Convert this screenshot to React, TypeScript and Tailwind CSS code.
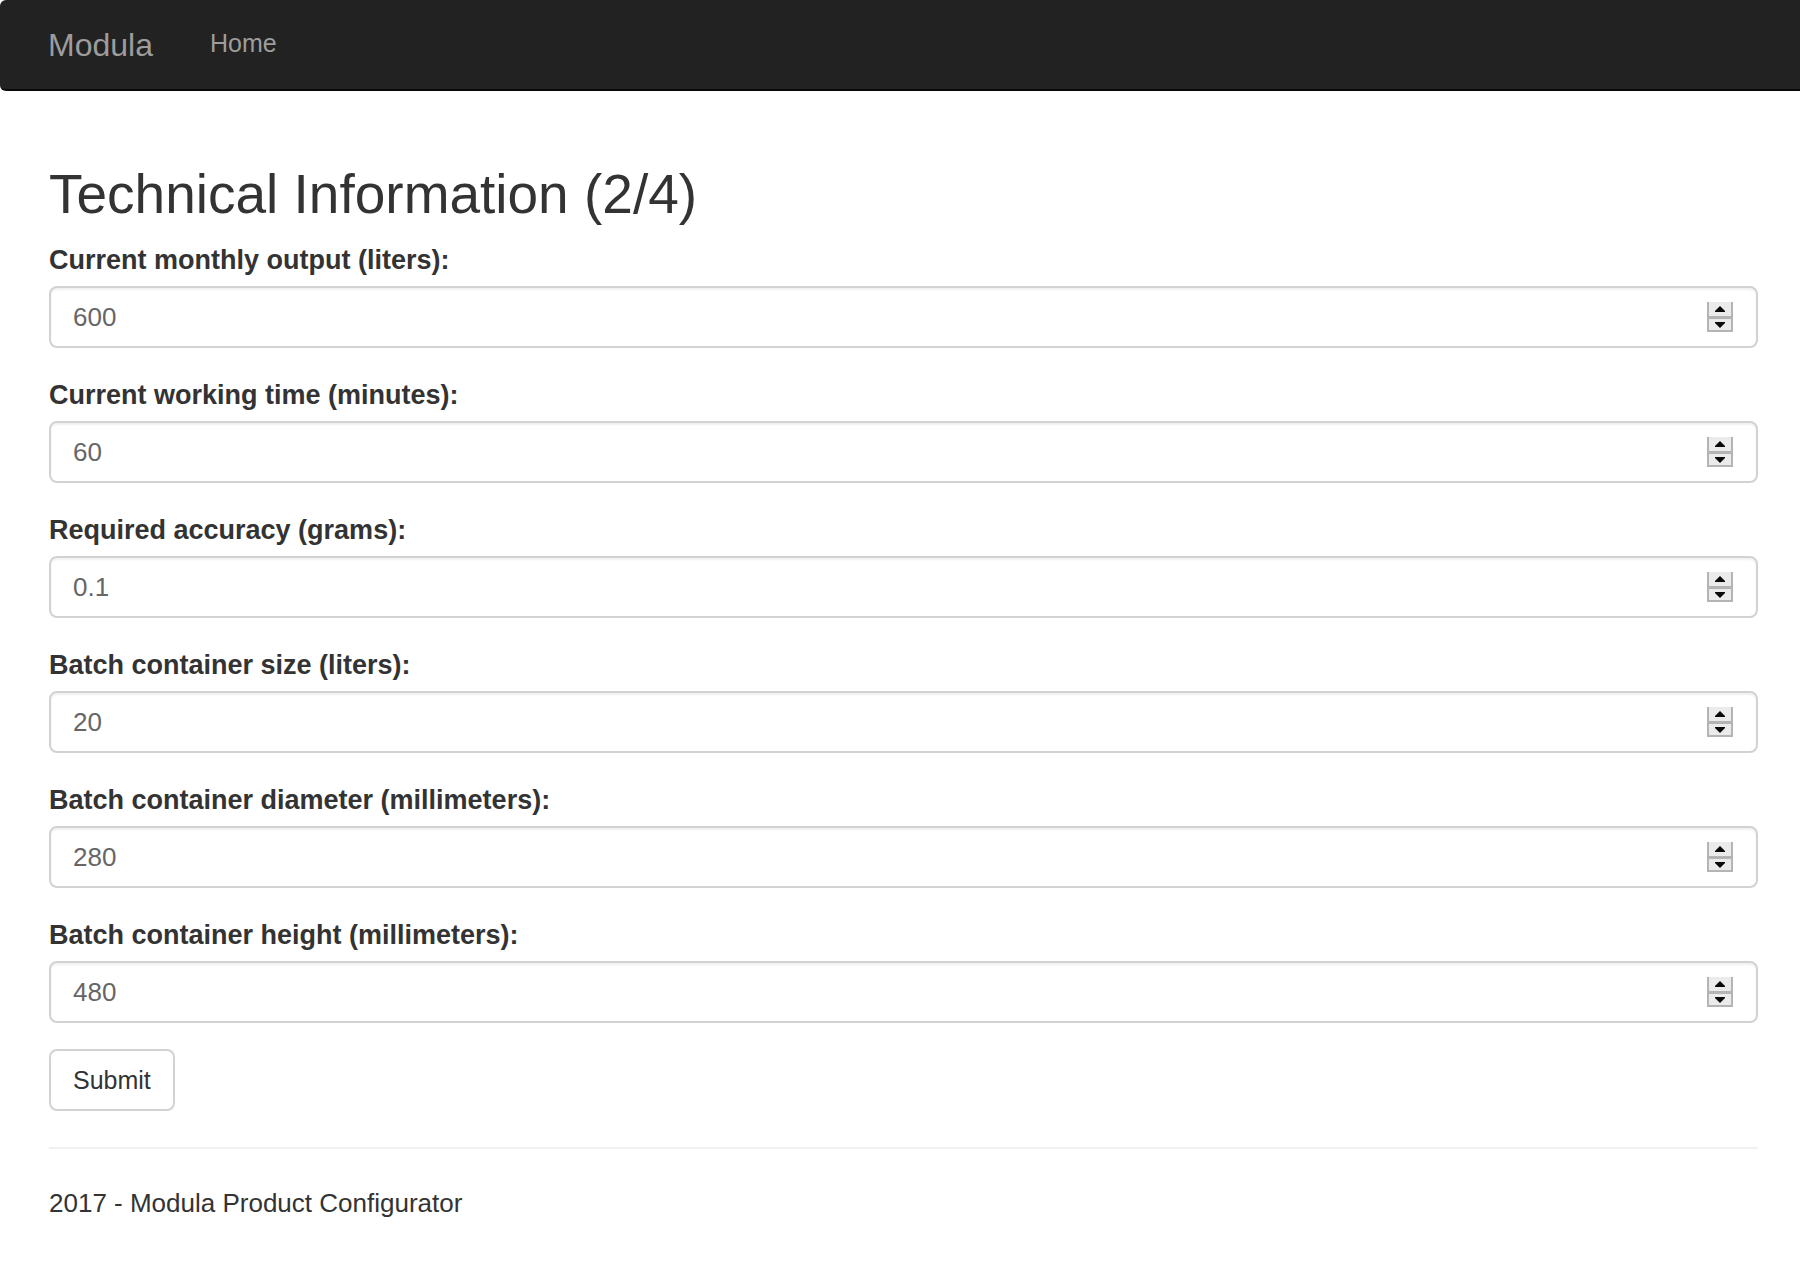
import { useRef } from "react";

type Field = { id: string; label: string; value: string; step: string };

const fields: Field[] = [
  { id: "output", label: "Current monthly output (liters):", value: "600", step: "1" },
  { id: "time", label: "Current working time (minutes):", value: "60", step: "1" },
  { id: "accuracy", label: "Required accuracy (grams):", value: "0.1", step: "0.1" },
  { id: "size", label: "Batch container size (liters):", value: "20", step: "1" },
  { id: "diameter", label: "Batch container diameter (millimeters):", value: "280", step: "1" },
  { id: "height", label: "Batch container height (millimeters):", value: "480", step: "1" },
];

function NumberField({ id, label, value, step }: Field) {
  const input = useRef<HTMLInputElement>(null);
  return (
    <div>
      <label htmlFor={id} className="block pb-2 text-[27px] leading-9 font-bold">
        {label}
      </label>
      <div className="flex h-[62px] items-center rounded-lg border-2 border-[#d2d2d2] bg-white pr-[23px] pl-[22px] shadow-[inset_0_2px_2px_rgba(0,0,0,0.06)]">
        <input
          ref={input}
          id={id}
          name={id}
          type="number"
          step={step}
          defaultValue={value}
          className="min-w-0 flex-1 appearance-none bg-transparent text-[26px] leading-9 text-[#666] outline-none [-moz-appearance:textfield] [&::-webkit-inner-spin-button]:appearance-none"
        />
        <div className="flex w-[26px] flex-col border-x-2 border-b-2 border-[#b4b4b4] bg-[#ebebeb]">
          <button
            type="button"
            aria-label="Increase"
            onClick={() => input.current?.stepUp()}
            className="flex h-[17px] items-center justify-center border-b-3 border-[#b4b4b4]"
          >
            <svg width="10" height="6" viewBox="0 0 10 6" aria-hidden="true">
              <path d="M5 0L10 5V6H0V5Z" fill="#0a0a0a" />
            </svg>
          </button>
          <button
            type="button"
            aria-label="Decrease"
            onClick={() => input.current?.stepDown()}
            className="flex h-[11px] items-center justify-center"
          >
            <svg width="10" height="6" viewBox="0 0 10 6" aria-hidden="true">
              <path d="M5 6L10 1V0H0V1Z" fill="#0a0a0a" />
            </svg>
          </button>
        </div>
      </div>
    </div>
  );
}

export default function App() {
  return (
    <div className="min-h-screen bg-white font-['Liberation_Sans',Arial,sans-serif] text-[#333]">
      <nav className="flex h-[91px] items-center gap-[57px] rounded-l-md border-b-2 border-[#080808] bg-[#222] px-12 text-[#9d9d9d]">
        <a href="#" className="text-[32px] leading-9">
          Modula
        </a>
        <a href="#" className="pb-[3px] text-[25px] leading-9">
          Home
        </a>
      </nav>
      <main className="pt-[71px] pr-[42px] pb-12 pl-[49px]">
        <h1 className="text-[55px] leading-[64px]">Technical Information (2/4)</h1>
        <form className="pt-4" onSubmit={(e) => e.preventDefault()}>
          <div className="flex flex-col gap-[29px]">
            {fields.map((f) => (
              <NumberField key={f.id} {...f} />
            ))}
          </div>
          <button
            type="submit"
            className="mt-[26px] flex h-[62px] items-center rounded-lg border-2 border-[#d2d2d2] bg-white px-[22px] text-[25px] leading-9"
          >
            Submit
          </button>
        </form>
        <hr className="mt-9 border-t-2 border-[#f1f1f1]" />
        <footer className="pt-9">
          <p className="text-[26px] leading-9">2017 - Modula Product Configurator</p>
        </footer>
      </main>
    </div>
  );
}
